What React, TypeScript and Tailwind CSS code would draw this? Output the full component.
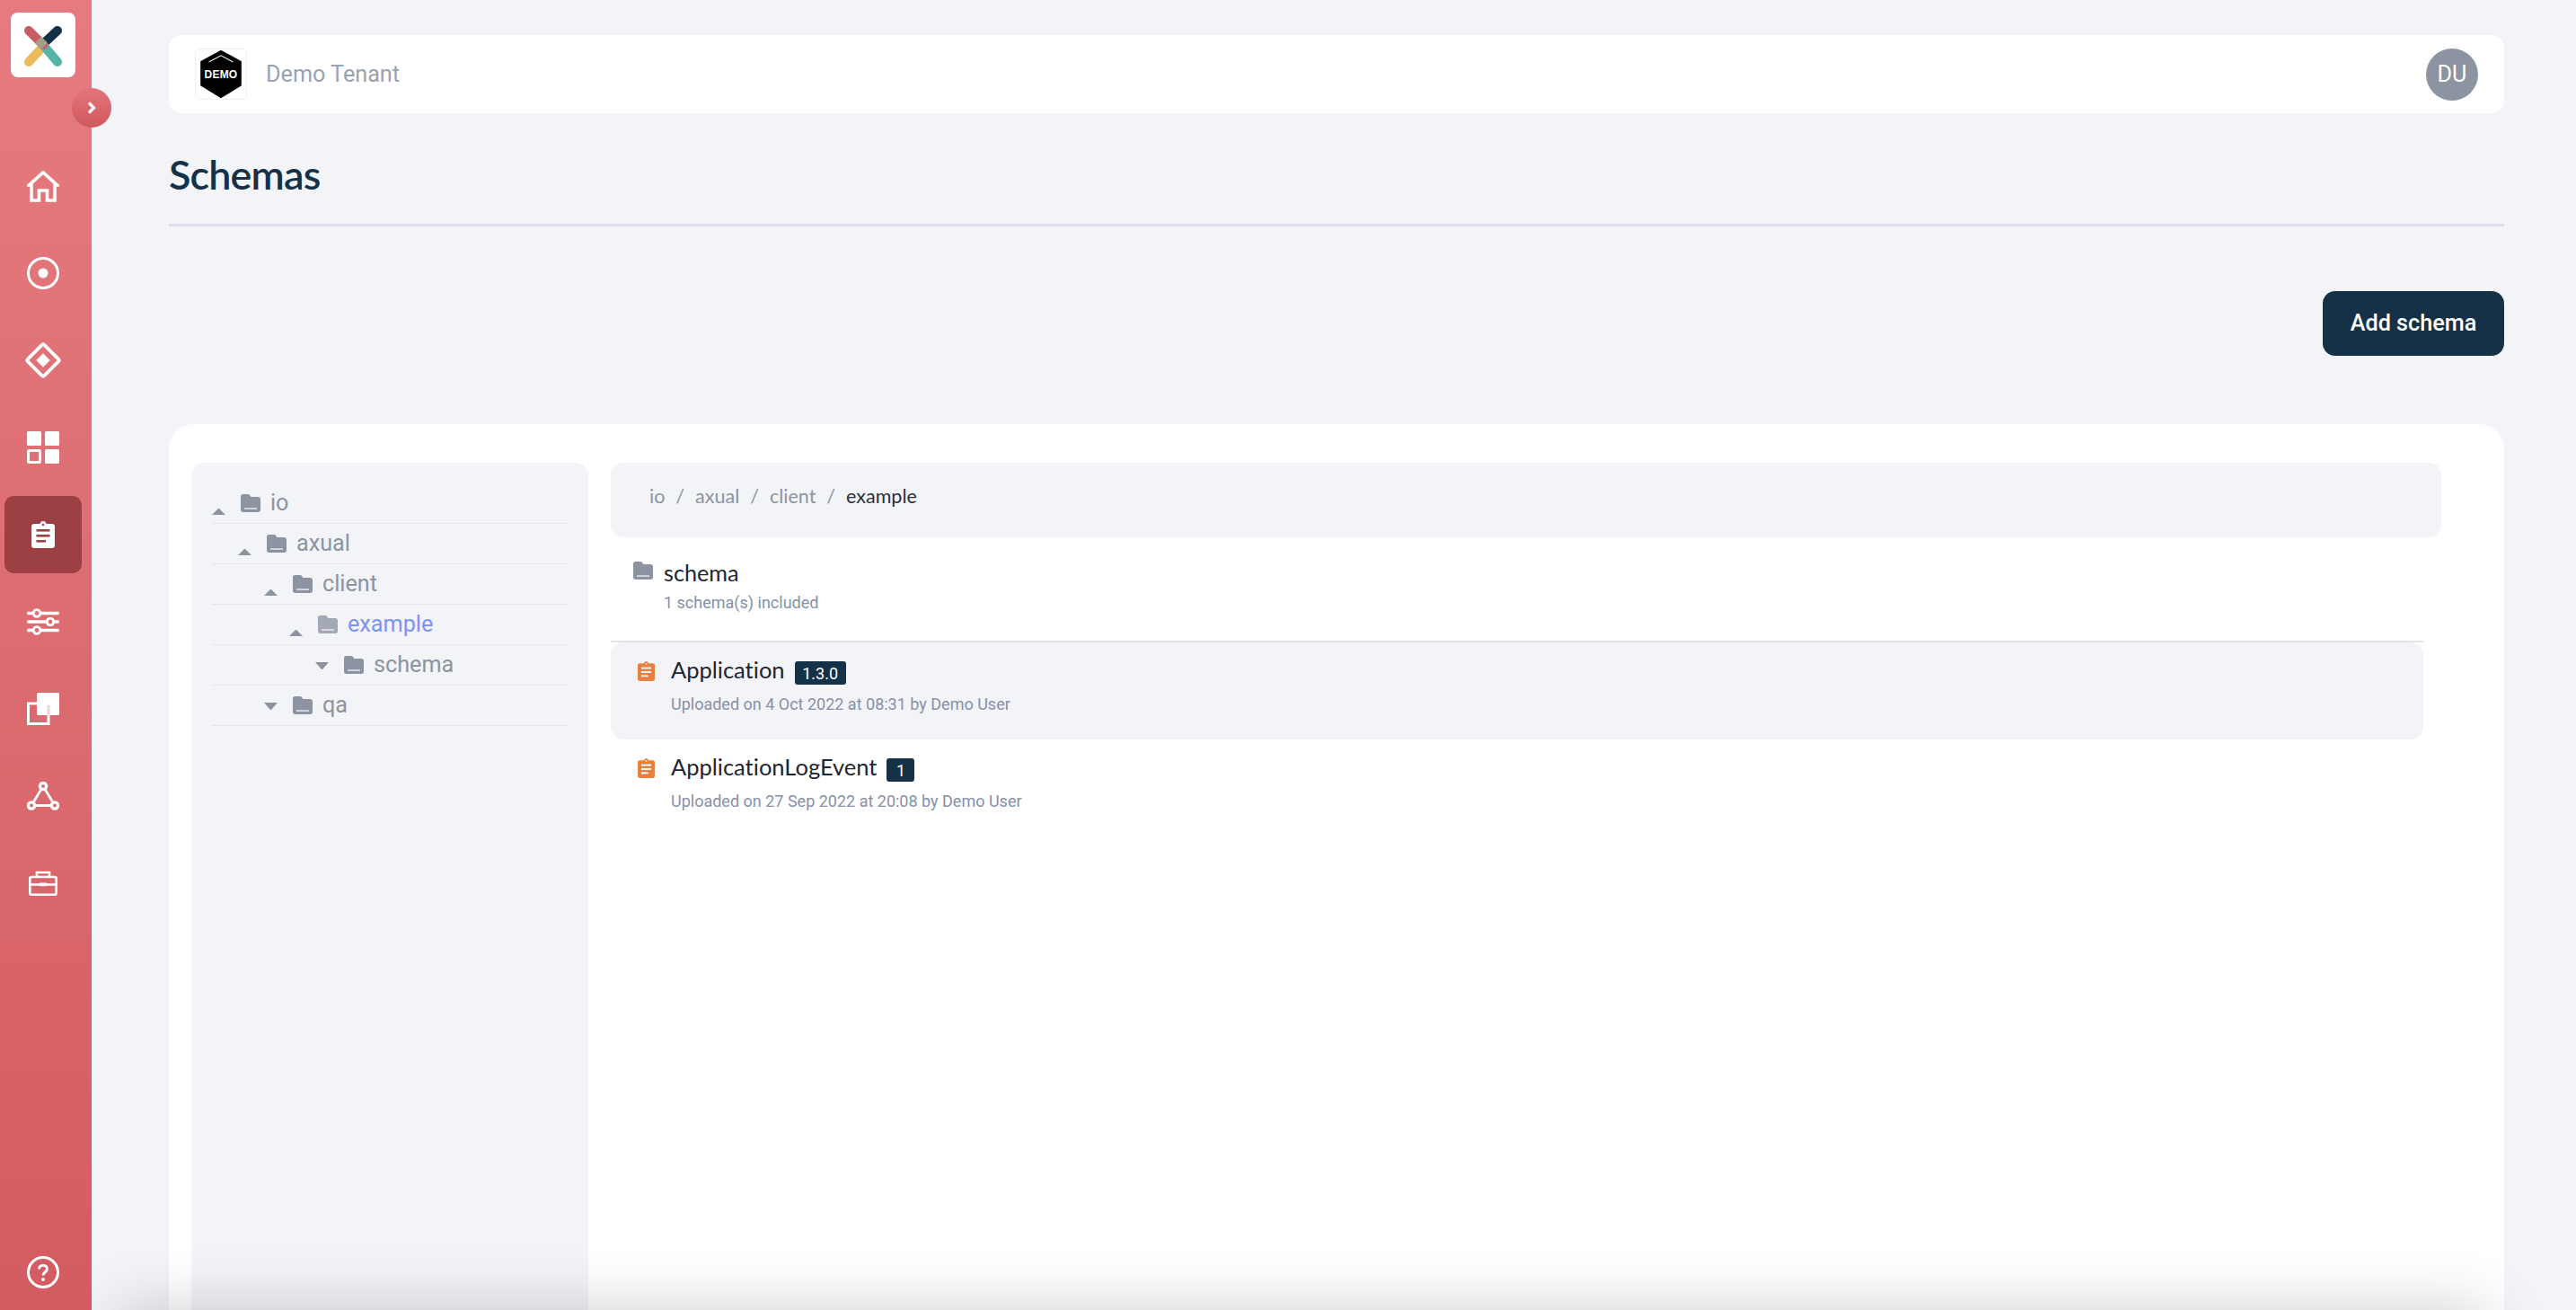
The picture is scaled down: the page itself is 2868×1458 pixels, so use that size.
import React from "react";

const roboto = "font-['Roboto',sans-serif]";
const lato = "font-['Lato',sans-serif] [font-variant-ligatures:none]";

function Folder({ className = "text-[#8c93a1]" }: { className?: string }) {
  return (
    <svg viewBox="0 0 22 20" className={`w-[22px] h-[20px] shrink-0 ${className}`}>
      <path fill="currentColor" d="M2.5 0H8c1 0 1.6.4 2.2 1.2L11.4 3h8.1C20.9 3 22 4 22 5.5v12c0 1.4-1.1 2.5-2.5 2.5h-17C1.100 20 0 18.900 0 17.500v-15C0 1.100 1.100 0 2.500 0z" />
      <rect x="4" y="15.400" width="14" height="1.300" fill="#f3f4f8" />
    </svg>
  );
}

function Clip({ className, fg }: { className: string; fg: string }) {
  return (
    <svg viewBox="0 0 26 30" className={className}>
      <path fill="currentColor" d="M3 3h6.500C10 1.300 11.400 0 13 0s3 1.300 3.500 3H23c1.700 0 3 1.300 3 3v21c0 1.700-1.300 3-3 3H3c-1.700 0-3-1.300-3-3V6c0-1.700 1.300-3 3-3z" />
      <circle cx="13" cy="4" r="1.300" fill={fg} />
      <rect x="5.500" y="9" width="15" height="2.600" fill={fg} />
      <rect x="5.500" y="15" width="15" height="2.600" fill={fg} />
      <rect x="5.500" y="21" width="10.500" height="2.600" fill={fg} />
    </svg>
  );
}

const sz = "w-[36px] h-[36px]";
const Home = () => (
  <svg viewBox="0 0 36 36" className={sz} fill="none" stroke="white" strokeWidth="3.600">
    <path d="M5 34V17H2.500L18 3l15.500 14H31v17h-8.500V23h-9v11z" />
  </svg>
);
const Target = () => (
  <svg viewBox="0 0 36 36" className={sz}>
    <circle cx="18" cy="18" r="16.500" fill="none" stroke="white" strokeWidth="3" />
    <circle cx="18" cy="18" r="5.500" fill="white" />
  </svg>
);
const Diamond = () => (
  <svg viewBox="0 0 40 40" className="w-[40px] h-[40px]">
    <rect x="7" y="7" width="26" height="26" rx="2" transform="rotate(45 20 20)" fill="none" stroke="white" strokeWidth="3.800" />
    <rect x="14.500" y="14.500" width="11" height="11" transform="rotate(45 20 20)" fill="white" />
  </svg>
);
const Grid = () => (
  <svg viewBox="0 0 36 36" className={sz}>
    <rect x="0" y="0" width="16" height="16" rx="1.500" fill="white" />
    <rect x="20" y="0" width="16" height="16" rx="1.500" fill="white" />
    <rect x="1.500" y="21.500" width="13" height="13" rx="1" fill="none" stroke="white" strokeWidth="3" />
    <rect x="20" y="20" width="16" height="16" rx="1.500" fill="white" />
  </svg>
);
const Sliders = () => (
  <svg viewBox="0 0 36 30" className="w-[36px] h-[30px]" fill="none" stroke="white">
    <path d="M1.500 5.500H34.500M1.500 15H34.500M1.500 24.500H34.500" strokeWidth="3.400" strokeLinecap="round" />
    <circle cx="11" cy="5.500" r="3.800" fill="#e07076" strokeWidth="2.800" />
    <circle cx="26" cy="15" r="3.800" fill="#df6f75" strokeWidth="2.800" />
    <circle cx="11" cy="24.500" r="3.800" fill="#de6e74" strokeWidth="2.800" />
  </svg>
);
const Copy = () => (
  <svg viewBox="0 0 36 36" className={sz}>
    <rect x="11" y="0" width="25" height="25" rx="1.500" fill="white" />
    <rect x="1.500" y="12" width="22.500" height="22.500" fill="none" stroke="white" strokeWidth="3" />
    <path d="M11 14H3v19h19v-8H11z" fill="#db696f" />
    <rect x="22.500" y="14" width="3" height="11" fill="#f4d0d2" />
  </svg>
);
const Triangle = () => (
  <svg viewBox="0 0 36 32" className="w-[36px] h-[32px]" fill="none" stroke="white" strokeWidth="3.400">
    <path d="M18 5L5 26.500H31z" strokeWidth="2.800" />
    <circle cx="18" cy="5" r="3.600" fill="#da686e" />
    <circle cx="5" cy="26.500" r="3.600" fill="#da686e" />
    <circle cx="31" cy="26.500" r="3.600" fill="#da686e" />
  </svg>
);
const Toolbox = () => (
  <svg viewBox="0 0 32 28" className="w-[32px] h-[28px]" fill="none" stroke="white" strokeWidth="2.600">
    <path d="M9 7V2h14v5" />
    <rect x="1.300" y="7" width="29.400" height="19.700" rx="2" />
    <path d="M1.300 15.500H30.700" />
    <rect x="11.500" y="13.500" width="9" height="3.800" rx="1" fill="white" stroke="none" />
  </svg>
);
const Help = () => (
  <svg viewBox="0 0 36 36" className={sz} fill="none">
    <circle cx="18" cy="18" r="16.500" stroke="white" strokeWidth="3" />
    <path d="M13.500 14.500c0-2.500 2-4.300 4.500-4.300s4.500 1.700 4.500 4c0 3.300-4.500 3.500-4.500 7.300" stroke="white" strokeWidth="3" />
    <circle cx="18" cy="26" r="2" fill="white" />
  </svg>
);

function NavItem({ children, active }: { children: React.ReactNode; active?: boolean }) {
  return (
    <div className="w-[86px] h-[97px] flex items-center justify-center">
      {active ? (
        <div className="w-[86px] h-[86px] rounded-[10px] bg-[#9c4043] flex items-center justify-center">{children}</div>
      ) : (
        children
      )}
    </div>
  );
}

function Logo() {
  return (
    <div className="w-[72px] h-[72px] bg-white rounded-[8px] flex items-center justify-center">
      <svg viewBox="0 0 72 72" className="w-[72px] h-[72px]" fill="none" strokeWidth="10" strokeLinecap="round">
        <path d="M20 55L34 40" stroke="#ecbb5e" />
        <path d="M52 20L38 33" stroke="#153147" />
        <path d="M52 55L36 36" stroke="#56b4a6" />
        <path d="M20 20L36 36" stroke="#c95c62" />
        <rect x="24" y="24" width="10" height="10" rx="2" transform="rotate(45 29 29) translate(7 0)" fill="#a59d8c" stroke="none" />
      </svg>
    </div>
  );
}

function DemoLogo() {
  return (
    <div className="relative w-[58px] h-[57px] rounded-[5px] border border-[#eeeef2] flex items-center justify-center">
      <svg viewBox="0 0 50 56" className="absolute left-[4px] top-0 w-[48px] h-[55px]">
        <path d="M25 1L48 13.500V41L25 55L2 41V13.500z" fill="#000" stroke="#000" strokeWidth="1.500" strokeLinejoin="round" />
        <path d="M11 14L25 6.500L39 14" stroke="#f0f0f0" strokeWidth="1.200" fill="none" />
      </svg>
      <span className="relative font-['Liberation_Sans',sans-serif] font-bold text-[12px] text-white tracking-[0.2px]">DEMO</span>
    </div>
  );
}

const tree = [
  { name: "io", pl: "pl-0", up: true },
  { name: "axual", pl: "pl-[29px]", up: true },
  { name: "client", pl: "pl-[58px]", up: true },
  { name: "example", pl: "pl-[86px]", up: true, active: true },
  { name: "schema", pl: "pl-[115px]", up: false },
  { name: "qa", pl: "pl-[58px]", up: false },
];

function TreeRow({ name, pl, up, active }: { name: string; pl: string; up: boolean; active?: boolean }) {
  return (
    <div className={`h-[45px] flex items-center border-b border-[#e6e7ec] ${pl}`}>
      {up ? (
        <span className="w-[15px] mr-[17px] self-end mb-[9px] border-x-[7.500px] border-x-transparent border-b-[7px] border-b-[#8c93a1]" />
      ) : (
        <span className="w-[15px] mr-[17px] mt-[2px] border-x-[7.500px] border-x-transparent border-t-[8px] border-t-[#8c93a1]" />
      )}
      <span className="mr-[11px]">
        <Folder className={active ? "text-[#a3a9b5]" : "text-[#8c93a1]"} />
      </span>
      <span className={`${roboto} text-[25.200px] leading-[30px] ${active ? "text-[#7b93f6]" : "text-[#8c93a1]"}`}>{name}</span>
    </div>
  );
}

function SchemaRow({ name, version, sub, selected, badgeW }: { name: string; version: string; sub: string; selected?: boolean; badgeW: string }) {
  return (
    <div className={`h-[108px] rounded-[14px] pl-[30px] pt-[17px] flex ${selected ? "bg-[#f3f4f8]" : ""}`}>
      <div className="pt-[4px] mr-[18px]">
        <Clip className="w-[19px] h-[22px] text-[#e8803f]" fg={selected ? "#f3f4f8" : "#ffffff"} />
      </div>
      <div>
        <div className="flex items-start h-[26px]">
          <span className={`${lato} text-[25.500px] leading-[26px] text-[#1e2530]`}>{name}</span>
          <span className={`ml-[11px] mt-[4px] h-[26px] ${badgeW} rounded-[3px] bg-[#153147] text-white ${roboto} text-[18px] leading-[28px] text-center`}>{version}</span>
        </div>
        <div className={`${roboto} text-[18px] leading-[20px] mt-[16px] text-[#8591a9]`}>{sub}</div>
      </div>
    </div>
  );
}

export default function App() {
  return (
    <div className="w-full h-screen flex bg-[#f3f4f8] overflow-hidden">
      <aside className="relative z-10 w-[102px] shrink-0 flex flex-col items-center pr-[6px] pt-[14px] pb-[24px] bg-gradient-to-b from-[#e57b80] to-[#d35c62]">
        <Logo />
        <div className="absolute left-[80px] top-[98px] w-[44px] h-[44px] rounded-full bg-gradient-to-b from-[#e3757a] to-[#d0585e] flex items-center justify-center">
          <svg viewBox="0 0 10 14" className="w-[10px] h-[14px]" fill="none" stroke="white" strokeWidth="3.200">
            <path d="M2 1.500l5.500 5.500-5.500 5.500" />
          </svg>
        </div>
        <div className="mt-[72px] flex flex-col">
          <NavItem><Home /></NavItem>
          <NavItem><Target /></NavItem>
          <NavItem><Diamond /></NavItem>
          <NavItem><Grid /></NavItem>
          <NavItem active><Clip className="w-[26px] h-[30px] text-white" fg="#9c4043" /></NavItem>
          <NavItem><Sliders /></NavItem>
          <NavItem><Copy /></NavItem>
          <NavItem><Triangle /></NavItem>
          <NavItem><Toolbox /></NavItem>
        </div>
        <div className="mt-auto"><Help /></div>
      </aside>

      <main className="relative flex-1 min-w-0 pl-[86px] pr-[80px] pt-[39px] overflow-hidden">
        <header className="h-[87px] bg-white rounded-[14px] flex items-center pl-[29px] pr-[29px]">
          <DemoLogo />
          <span className={`${roboto} ml-[21px] text-[25.200px] text-[#98a2b3]`}>Demo Tenant</span>
          <div className={`ml-auto w-[58px] h-[58px] rounded-full bg-[#8c93a1] text-white ${roboto} text-[25.200px] flex items-center justify-center`}>DU</div>
        </header>

        <div className="h-[126px] border-b-[3px] border-[#dfdfee] flex items-center pt-[14px]">
          <h1 className={`${lato} font-semibold text-[44.800px] leading-none tracking-[-0.8px] text-[#153147]`}>Schemas</h1>
        </div>

        <div className="mt-[72px] flex justify-end">
          <button className={`w-[202px] h-[72px] rounded-[14px] bg-[#153147] text-white ${roboto} font-medium text-[25.200px]`}>Add schema</button>
        </div>

        <section className="mt-[76px] h-[1100px] bg-white rounded-[28px] flex pl-[25px] pr-[70px] pt-[43px] gap-[25px]">
          <div className="w-[442px] shrink-0 h-full bg-[#f3f4f8] rounded-[14px] px-[23px] pt-[23px]">
            {tree.map((t) => (
              <TreeRow key={t.name} {...t} />
            ))}
          </div>
          <div className="flex-1 min-w-0">
            <div className={`h-[83px] bg-[#f3f4f8] rounded-[14px] pl-[43px] pb-[9px] flex items-center ${lato} text-[21.500px] text-[#8c93a1] mb-[24px]`}>
              <span>io</span>
              <span className="mx-[12px]">/</span>
              <span>axual</span>
              <span className="mx-[12px]">/</span>
              <span>client</span>
              <span className="mx-[12px]">/</span>
              <span className="text-[#2a303c]">example</span>
            </div>
            <div className="mr-[20px] border-b-2 border-[#e3e3e3] h-[93px] pl-[25px] flex">
              <div className="pt-[3px] mr-[12px]"><Folder /></div>
              <div>
                <div className={`${lato} text-[25.200px] leading-[30px] text-[#1e2530]`}>schema</div>
                <div className={`${roboto} text-[18px] leading-[20px] mt-[9px] text-[#8591a9]`}>1 schema(s) included</div>
              </div>
            </div>
            <div className="mr-[20px]">
              <SchemaRow name="Application" version="1.3.0" sub="Uploaded on 4 Oct 2022 at 08:31 by Demo User" selected badgeW="w-[57px]" />
              <SchemaRow name="ApplicationLogEvent" version="1" sub="Uploaded on 27 Sep 2022 at 20:08 by Demo User" badgeW="w-[31px]" />
            </div>
          </div>
        </section>

        <div className="absolute left-[30px] right-[100px] bottom-[-200px] h-[200px] shadow-[0_0_70px_rgba(0,0,0,0.2)]" />
      </main>
    </div>
  );
}
